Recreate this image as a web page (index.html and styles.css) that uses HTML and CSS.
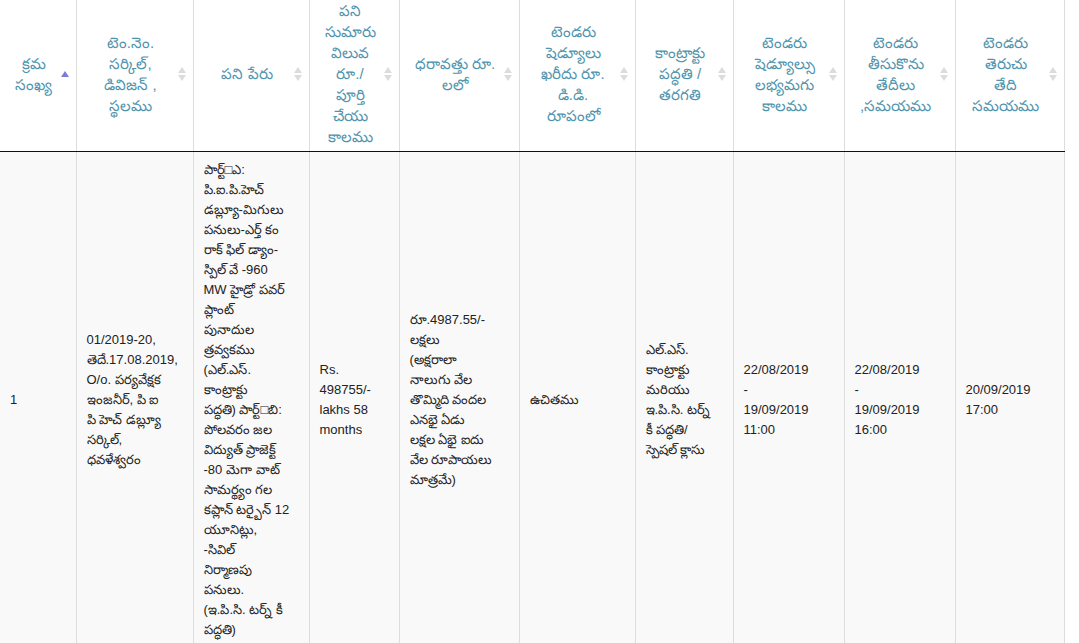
FILE: index.html
```html
<!DOCTYPE html>
<html lang="te">
<head>
<meta charset="utf-8">
<title>టెండర్లు</title>
<link rel="stylesheet" href="styles.css">
</head>
<body>
<table class="tenders">
  <colgroup>
    <col class="c1"><col class="c2"><col class="c3"><col class="c4"><col class="c5">
    <col class="c6"><col class="c7"><col class="c8"><col class="c9"><col class="c10">
  </colgroup>
  <thead>
    <tr>
      <th class="sort-asc">క్రమ<br>సంఖ్య</th>
      <th class="sort-both">టెం.నెం.<br>సర్కిల్,<br>డివిజన్ ,<br>స్థలము</th>
      <th class="sort-both">పని పేరు</th>
      <th class="sort-both">పని<br>సుమారు<br>విలువ<br>రూ./<br>పూర్తి<br>చేయు<br>కాలము</th>
      <th class="sort-both">ధరావత్తు రూ.<br>లలో</th>
      <th class="sort-both">టెండరు<br>షెడ్యూలు<br>ఖరీదు రూ.<br>డి.డి.<br>రూపంలో</th>
      <th class="sort-both">కాంట్రాక్టు<br>పద్ధతి /<br>తరగతి</th>
      <th class="sort-both">టెండరు<br>షెడ్యూల్సు<br>లభ్యమగు<br>కాలము</th>
      <th class="sort-both">టెండరు<br>తీసుకొను<br>తేదీలు<br>,సమయము</th>
      <th class="sort-both">టెండరు<br>తెరుచు<br>తేది<br>సమయము</th>
    </tr>
  </thead>
  <tbody>
    <tr>
      <td>1</td>
      <td>01/2019-20,<br>తెదే.17.08.2019,<br>O/o. పర్యవేక్షక<br>ఇంజనీర్, పి ఐ<br>పి హెచ్ డబ్ల్యూ<br>సర్కిల్,<br>ధవళేశ్వరం</td>
      <td>పార్ట్□ఎ:<br>పి.ఐ.పి.హెచ్<br>డబ్ల్యూ-మిగులు<br>పనులు-ఎర్త్ కం<br>రాక్ ఫిల్ డ్యాం-<br>స్పిల్ వే -960<br>MW హైడ్రో పవర్<br>ప్లాంట్<br>పునాదుల<br>త్రవ్వకము<br>(ఎల్.ఎస్.<br>కాంట్రాక్టు<br>పద్ధతి) పార్ట్□బి:<br>పోలవరం జల<br>విద్యుత్ ప్రాజెక్ట్<br>-80 మెగా వాట్<br>సామర్థ్యం గల<br>కప్లాన్ టర్బైన్ 12<br>యూనిట్లు,<br>-సివిల్<br>నిర్మాణపు<br>పనులు.<br>(ఇ.పి.సి. టర్న్ కీ<br>పద్ధతి)</td>
      <td>Rs.<br>498755/-<br>lakhs 58<br>months</td>
      <td>రూ.4987.55/-<br>లక్షలు<br>(అక్షరాలా<br>నాలుగు వేల<br>తొమ్మిది వందల<br>ఎనభై ఏడు<br>లక్షల ఏభై ఐదు<br>వేల రూపాయలు<br>మాత్రమే)</td>
      <td>ఉచితము</td>
      <td>ఎల్.ఎస్.<br>కాంట్రాక్టు<br>మరియు<br>ఇ.పి.సి. టర్న్<br>కీ పద్ధతి/<br>స్పెషల్ క్లాసు</td>
      <td>22/08/2019<br>-<br>19/09/2019<br>11:00</td>
      <td>22/08/2019<br>-<br>19/09/2019<br>16:00</td>
      <td>20/09/2019<br>17:00</td>
    </tr>
  </tbody>
</table>
</body>
</html>
```

FILE: styles.css
```css
html, body {
  margin: 0;
  padding: 0;
  background: #ffffff;
}

body {
  font-family: "Liberation Sans", Arial, sans-serif;
  font-size: 13px;
  color: #333333;
  margin-top: -4px;
}

.tenders {
  border-collapse: collapse;
  table-layout: fixed;
  width: 1064px;
}

.c1 { width: 76px; }
.c2 { width: 117px; }
.c3 { width: 116px; }
.c4 { width: 90px; }
.c5 { width: 120px; }
.c6 { width: 116px; }
.c7 { width: 98px; }
.c8 { width: 111px; }
.c9 { width: 111px; }
.c10 { width: 109px; }

.tenders th {
  position: relative;
  height: 155px;
  padding: 0 18px 0 10px;
  font-weight: normal;
  font-size: 15px;
  line-height: 21px;
  color: #4f94ad;
  text-align: center;
  vertical-align: middle;
  border-right: 1px solid #dddddd;
  border-bottom: 1px solid #111111;
  background: #ffffff;
}

.tenders th::before,
.tenders th::after {
  content: "";
  position: absolute;
  right: 7px;
  width: 0;
  height: 0;
  border-left: 4px solid transparent;
  border-right: 4px solid transparent;
}

.tenders th.sort-both::before {
  top: calc(50% - 7px);
  border-bottom: 6px solid #dcdcdc;
}

.tenders th.sort-both::after {
  top: calc(50% + 1px);
  border-top: 6px solid #dcdcdc;
}

.tenders th.sort-asc::before {
  top: calc(50% - 3px);
  border-bottom: 6px solid #7b7bd6;
}

.tenders td {
  padding: 8px 10px;
  line-height: 20px;
  vertical-align: middle;
  text-align: left;
  background: #f9f9f9;
  border-right: 1px solid #dddddd;
  color: #222222;
}
```
